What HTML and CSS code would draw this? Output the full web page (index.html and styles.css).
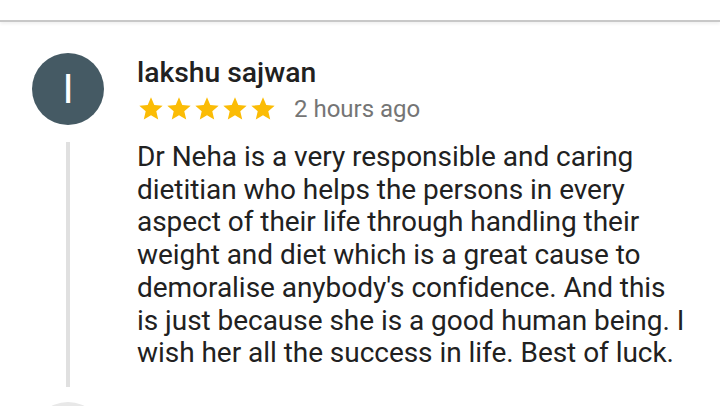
FILE: index.html
```html
<!DOCTYPE html>
<html>
<head>
<meta charset="utf-8">
<link rel="stylesheet" href="styles.css">
</head>
<body>
<div class="topbar"></div>
<div class="review">
  <div class="rail">
    <div class="avatar">I</div>
    <div class="thread"></div>
  </div>
  <div class="content">
    <div class="name">lakshu sajwan</div>
    <div class="meta">
      <div class="stars">
        <svg viewBox="0 0 24 24"><path d="M12 17.27L18.18 21l-1.64-7.03L22 9.24l-7.19-.61L12 2 9.19 8.63 2 9.24l5.46 4.73L5.82 21z"/></svg>
        <svg viewBox="0 0 24 24"><path d="M12 17.27L18.18 21l-1.64-7.03L22 9.24l-7.19-.61L12 2 9.19 8.63 2 9.24l5.46 4.73L5.82 21z"/></svg>
        <svg viewBox="0 0 24 24"><path d="M12 17.27L18.18 21l-1.64-7.03L22 9.24l-7.19-.61L12 2 9.19 8.63 2 9.24l5.46 4.73L5.82 21z"/></svg>
        <svg viewBox="0 0 24 24"><path d="M12 17.27L18.18 21l-1.64-7.03L22 9.24l-7.19-.61L12 2 9.19 8.63 2 9.24l5.46 4.73L5.82 21z"/></svg>
        <svg viewBox="0 0 24 24"><path d="M12 17.27L18.18 21l-1.64-7.03L22 9.24l-7.19-.61L12 2 9.19 8.63 2 9.24l5.46 4.73L5.82 21z"/></svg>
      </div>
      <span class="time">2 hours ago</span>
    </div>
    <p class="text">Dr Neha is a very responsible and caring dietitian who helps the persons in every aspect of their life through handling their weight and diet which is a great cause to demoralise anybody's confidence. And this is just because she is a good human being. I wish her all the success in life. Best of luck.</p>
  </div>
</div>
<div class="next">
  <div class="avatar next-avatar"></div>
</div>
</body>
</html>
```
FILE: styles.css
```css
html, body {
  margin: 0;
  padding: 0;
  background: #ffffff;
  overflow: hidden;
}
body {
  width: 720px;
  height: 406px;
  font-family: Roboto, "Noto Sans", sans-serif;
  color: #212121;
}
.topbar {
  height: 20px;
  border-bottom: 2px solid #c8c8c8;
  box-shadow: 0 2px 3px rgba(0, 0, 0, 0.06);
}
.review {
  display: flex;
  padding-top: 31px;
}
.rail {
  width: 137px;
  flex: none;
  display: flex;
  flex-direction: column;
  padding-left: 32px;
  box-sizing: border-box;
}
.avatar {
  width: 72px;
  height: 72px;
  border-radius: 50%;
  background: #455a64;
  color: #ffffff;
  font-size: 41px;
  line-height: 72px;
  text-align: center;
}
.thread {
  width: 4px;
  height: 245px;
  margin-left: 34px;
  margin-top: 17px;
  background: #e0e0e0;
}
.content {
  flex: 1;
  min-width: 0;
}
.name {
  margin-top: 3px;
  font-size: 28.3px;
  font-weight: 500;
  line-height: 33px;
  color: #212121;
}
.meta {
  display: flex;
  align-items: center;
  height: 39px;
}
.stars {
  display: flex;
}
.stars svg {
  width: 28px;
  height: 28px;
  fill: #fbbc05;
}
.time {
  margin-left: 17px;
  font-size: 24px;
  color: #757575;
}
.text {
  margin: 13px 0 0 0;
  font-size: 28px;
  line-height: 32.7px;
  letter-spacing: -0.04px;
  width: 550px;
}
.next {
  height: 4px;
  overflow: hidden;
  padding-top: 15px;
  padding-left: 32px;
}
.next-avatar {
  background: #e8e8e8;
}
```
